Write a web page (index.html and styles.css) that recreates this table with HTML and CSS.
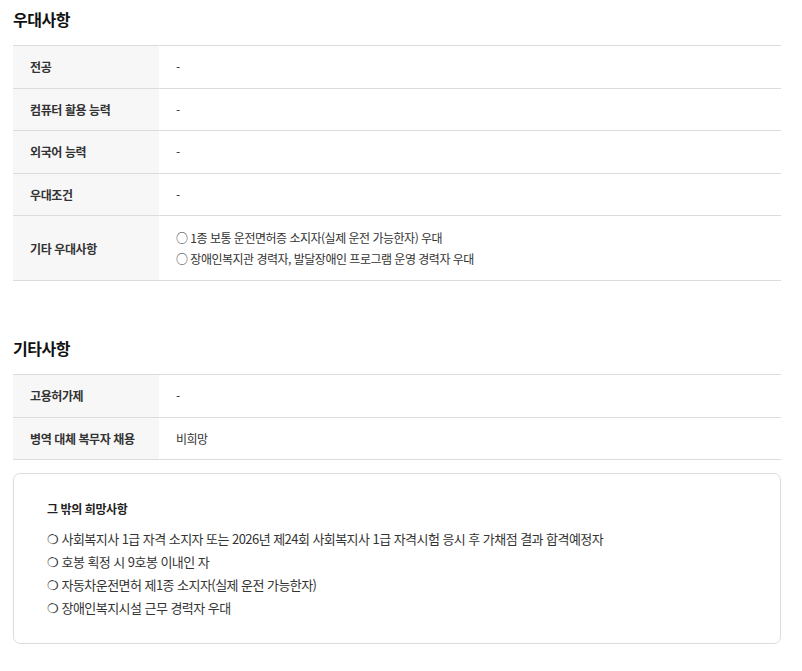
FILE: index.html
```html
<!DOCTYPE html>
<html lang="ko">
<head>
<meta charset="utf-8">
<link rel="stylesheet" href="styles.css">
</head>
<body>
<div class="page">
  <section class="sec">
    <h2 class="sec-title">우대사항</h2>
    <table class="info">
      <tr><th>전공</th><td>-</td></tr>
      <tr><th>컴퓨터 활용 능력</th><td>-</td></tr>
      <tr><th>외국어 능력</th><td>-</td></tr>
      <tr><th>우대조건</th><td>-</td></tr>
      <tr class="tall"><th>기타 우대사항</th><td>○ 1종 보통 운전면허증 소지자(실제 운전 가능한자) 우대<br>○ 장애인복지관 경력자, 발달장애인 프로그램 운영 경력자 우대</td></tr>
    </table>
  </section>
  <section class="sec sec2">
    <h2 class="sec-title">기타사항</h2>
    <table class="info">
      <tr><th>고용허가제</th><td>-</td></tr>
      <tr><th>병역 대체 복무자 채용</th><td>비희망</td></tr>
    </table>
    <div class="box">
      <h3 class="box-title">그 밖의 희망사항</h3>
      <ul class="wish">
        <li>❍ 사회복지사 1급 자격 소지자 또는 2026년 제24회 사회복지사 1급 자격시험 응시 후 가채점 결과 합격예정자</li>
        <li>❍ 호봉 획정 시 9호봉 이내인 자</li>
        <li>❍ 자동차운전면허 제1종 소지자(실제 운전 가능한자)</li>
        <li>❍ 장애인복지시설 근무 경력자 우대</li>
      </ul>
    </div>
  </section>
</div>
</body>
</html>
```
FILE: styles.css
```css
html, body { margin: 0; padding: 0; background: #fff; }
body {
  font-family: "Noto Sans CJK KR", "Noto Sans", sans-serif;
  color: #333;
}
.page { width: 768px; margin-left: 13px; }
.sec-title {
  margin: 0;
  padding-top: 7px;
  height: 38px;
  font-size: 16px;
  font-weight: 700;
  color: #111;
  line-height: 24px;
  letter-spacing: -0.5px;
}
.sec2 { margin-top: 48px; }
.info {
  width: 100%;
  border-collapse: collapse;
  border-top: 1px solid #dcdcdc;
}
.info tr { border-bottom: 1px solid #dcdcdc; }
.info th {
  width: 146px;
  box-sizing: border-box;
  background: #f7f7f7;
  text-align: left;
  font-weight: 700;
  font-size: 12px;
  color: #333;
  padding: 0 0 0 17px;
  height: 42.5px;
  letter-spacing: -0.4px;
}
.info td {
  font-size: 12px;
  padding: 0 0 0 17px;
  color: #333;
  letter-spacing: -0.5px;
}
.info tr.tall th { height: 65px; }
.info tr.tall td { line-height: 21px; }
.box {
  margin-top: 13px;
  border: 1px solid #dcdcdc;
  border-radius: 7px;
  padding: 24px 33px 24px;
}
.box-title {
  margin: 0 0 7px;
  font-size: 12px;
  font-weight: 700;
  color: #222;
  line-height: 22px;
  letter-spacing: -0.4px;
}
.wish {
  list-style: none;
  margin: 0;
  padding: 0;
}
.wish li {
  font-size: 13px;
  line-height: 23px;
  color: #333;
  letter-spacing: -0.55px;
}
```
